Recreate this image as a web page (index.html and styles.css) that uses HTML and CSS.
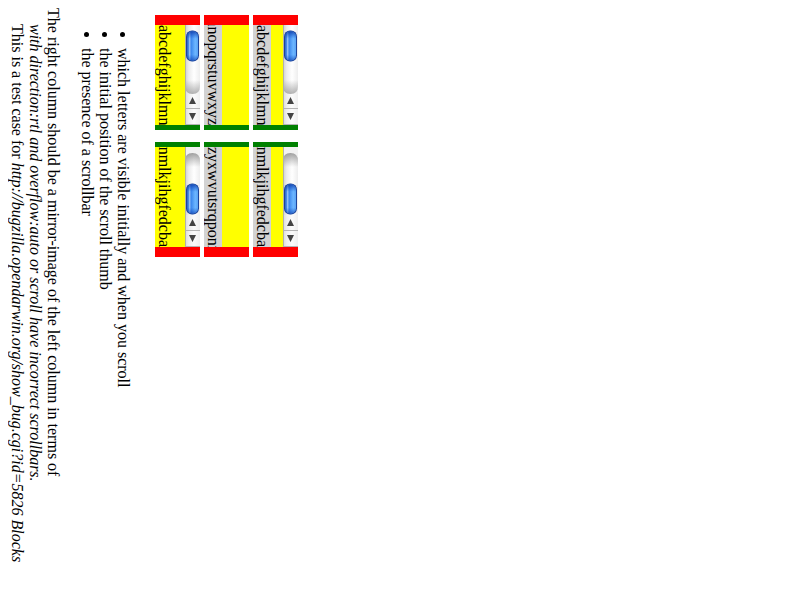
FILE: index.html
```html
<!DOCTYPE html>
<html lang="en">
<head>
<meta charset="utf-8">
<title>Vertical blocks and scrollbars</title>
<link rel="stylesheet" href="styles.css">
</head>
<body>
<svg class="defs" aria-hidden="true">
  <defs>
    <linearGradient id="track" x1="0" x2="1" y1="0" y2="0">
      <stop offset="0" stop-color="#cfcfcf"/><stop offset=".25" stop-color="#ececec"/><stop offset=".6" stop-color="#fff"/><stop offset="1" stop-color="#eee"/>
    </linearGradient>
    <linearGradient id="cap" x1="0" x2="0" y1="0" y2="1">
      <stop offset="0" stop-color="#888" stop-opacity="0"/><stop offset="1" stop-color="#888" stop-opacity=".65"/>
    </linearGradient>
    <linearGradient id="top-cap" x1="0" x2="0" y1="0" y2="1">
      <stop offset="0" stop-color="#777" stop-opacity=".7"/><stop offset="1" stop-color="#888" stop-opacity="0"/>
    </linearGradient>
    <linearGradient id="blue" x1="0" x2="1" y1="0" y2="0">
      <stop offset="0" stop-color="#2c62c4"/><stop offset=".15" stop-color="#4c8ee8"/><stop offset=".25" stop-color="#a4ccfa"/><stop offset=".36" stop-color="#3a86ec"/><stop offset=".75" stop-color="#6cb6ff"/><stop offset="1" stop-color="#5aa4f4"/>
    </linearGradient>
    <linearGradient id="shade" x1="0" x2="0" y1="0" y2="1">
      <stop offset="0" stop-color="#0a38a8" stop-opacity=".8"/><stop offset=".25" stop-color="#0a48c0" stop-opacity="0"/><stop offset=".8" stop-color="#0a48c0" stop-opacity="0"/><stop offset="1" stop-color="#0a38a8" stop-opacity=".6"/>
    </linearGradient>
    <g id="arrows">
      <rect y="67" width="15" height="33" fill="url(#track)" opacity=".7"/>
      <path d="M0 83.5H15M0 99.5H15" stroke="#b4b4b4"/>
      <path d="M7.5 72L11 79H4ZM7.5 95L4 88H11Z" fill="#444"/>
    </g>
    <g id="thumb">
      <rect x="1" y=".5" width="13" height="31" rx="6" fill="#1d459c"/>
      <rect x="2" y="1.5" width="11" height="29" rx="5" fill="url(#blue)"/>
      <rect x="2" y="1.5" width="11" height="29" rx="5" fill="url(#shade)"/>
    </g>
    <g id="bar-start">
      <rect width="15" height="100" fill="#f2f2f2"/>
      <use href="#arrows"/>
      <path d="M0 0H15V61Q15 69 7.5 69Q0 69 0 61Z" fill="url(#track)"/>
      <path d="M0 55H15V61Q15 69 7.5 69Q0 69 0 61Z" fill="url(#cap)"/>
      <path d="M.5 0V100" stroke="#b0b0b0"/>
      <use href="#thumb" y="5"/>
    </g>
    <g id="bar-end">
      <rect width="15" height="100" fill="#f2f2f2"/>
      <use href="#arrows"/>
      <path d="M0 68V14Q0 6 7.5 6Q15 6 15 14V68Z" fill="url(#track)"/>
      <path d="M0 20V14Q0 6 7.5 6Q15 6 15 14V20Z" fill="url(#top-cap)"/>
      <path d="M.5 0V100" stroke="#b0b0b0"/>
      <use href="#thumb" y="36"/>
    </g>
  </defs>
</svg>
<p class="case">This is a test case for <i>http://bugzilla.opendarwin.org/show_bug.cgi?id=5826 Blocks<br>with direction:rtl and overflow:auto or scroll have incorrect scrollbars.</i></p>
<p class="intro">The right column should be a mirror-image of the left column in terms of</p>
<ul class="terms">
  <li>the presence of a scrollbar</li>
  <li>the initial position of the scroll thumb</li>
  <li>which letters are visible initially and when you scroll</li>
</ul>
<div class="boxes">
  <div class="box from-start"><div class="view"><span>abcdefghijklmnopqrstuvwxyz</span></div><svg class="bar" viewBox="0 0 15 100"><use href="#bar-start"/></svg></div>
  <div class="box mirrored from-end"><div class="view"><span>zyxwvutsrqponmlkjihgfedcba</span></div><svg class="bar" viewBox="0 0 15 100"><use href="#bar-end"/></svg></div>
  <div class="box from-end"><div class="view"><span class="shaded">abcdefghijklmnopqrstuvwxyz</span></div></div>
  <div class="box mirrored from-start"><div class="view"><span class="shaded">zyxwvutsrqponmlkjihgfedcba</span></div></div>
  <div class="box from-start"><div class="view"><span class="shaded">abcdefghijklmnopqrstuvwxyz</span></div><svg class="bar" viewBox="0 0 15 100"><use href="#bar-start"/></svg></div>
  <div class="box mirrored from-end"><div class="view"><span class="shaded">zyxwvutsrqponmlkjihgfedcba</span></div><svg class="bar" viewBox="0 0 15 100"><use href="#bar-end"/></svg></div>
</div>
</body>
</html>
```
FILE: styles.css
```css
html {
  writing-mode: vertical-lr;
  background: #fff;
}

body {
  margin: 8px;
  font: 16px/18px "Liberation Serif", "Times New Roman", serif;
  color: #000;
}

.defs {
  position: absolute;
  width: 0;
  height: 0;
}

.case {
  margin: 0;
  padding-inline-start: 16px;
}

.intro {
  margin: 0;
}

.terms {
  margin: 0;
  margin-block: 16px 23px;
  padding-inline-start: 40px;
}

.boxes {
  display: grid;
  grid-template-columns: 115px 115px;
  gap: 4px 12px;
  padding-inline-start: 7px;
}

/* A yellow scroller, red on its starting side and green on the other. */
.box {
  display: flex;
  flex-direction: column;
  block-size: 45px;
  background: #ff0;
  border-top: 10px solid #f00;
  border-bottom: 5px solid #008000;
}

.mirrored {
  border-top: 5px solid #008000;
  border-bottom: 10px solid #f00;
}

.view {
  display: flex;
  flex: 1;
  align-items: flex-start;
  overflow: hidden;
}

.from-end .view {
  justify-content: flex-end;
}

.view span {
  flex: none;
}

.shaded {
  background: #d3d3d3;
}

.bar {
  display: block;
  width: 15px;
  height: 100px;
}
```
